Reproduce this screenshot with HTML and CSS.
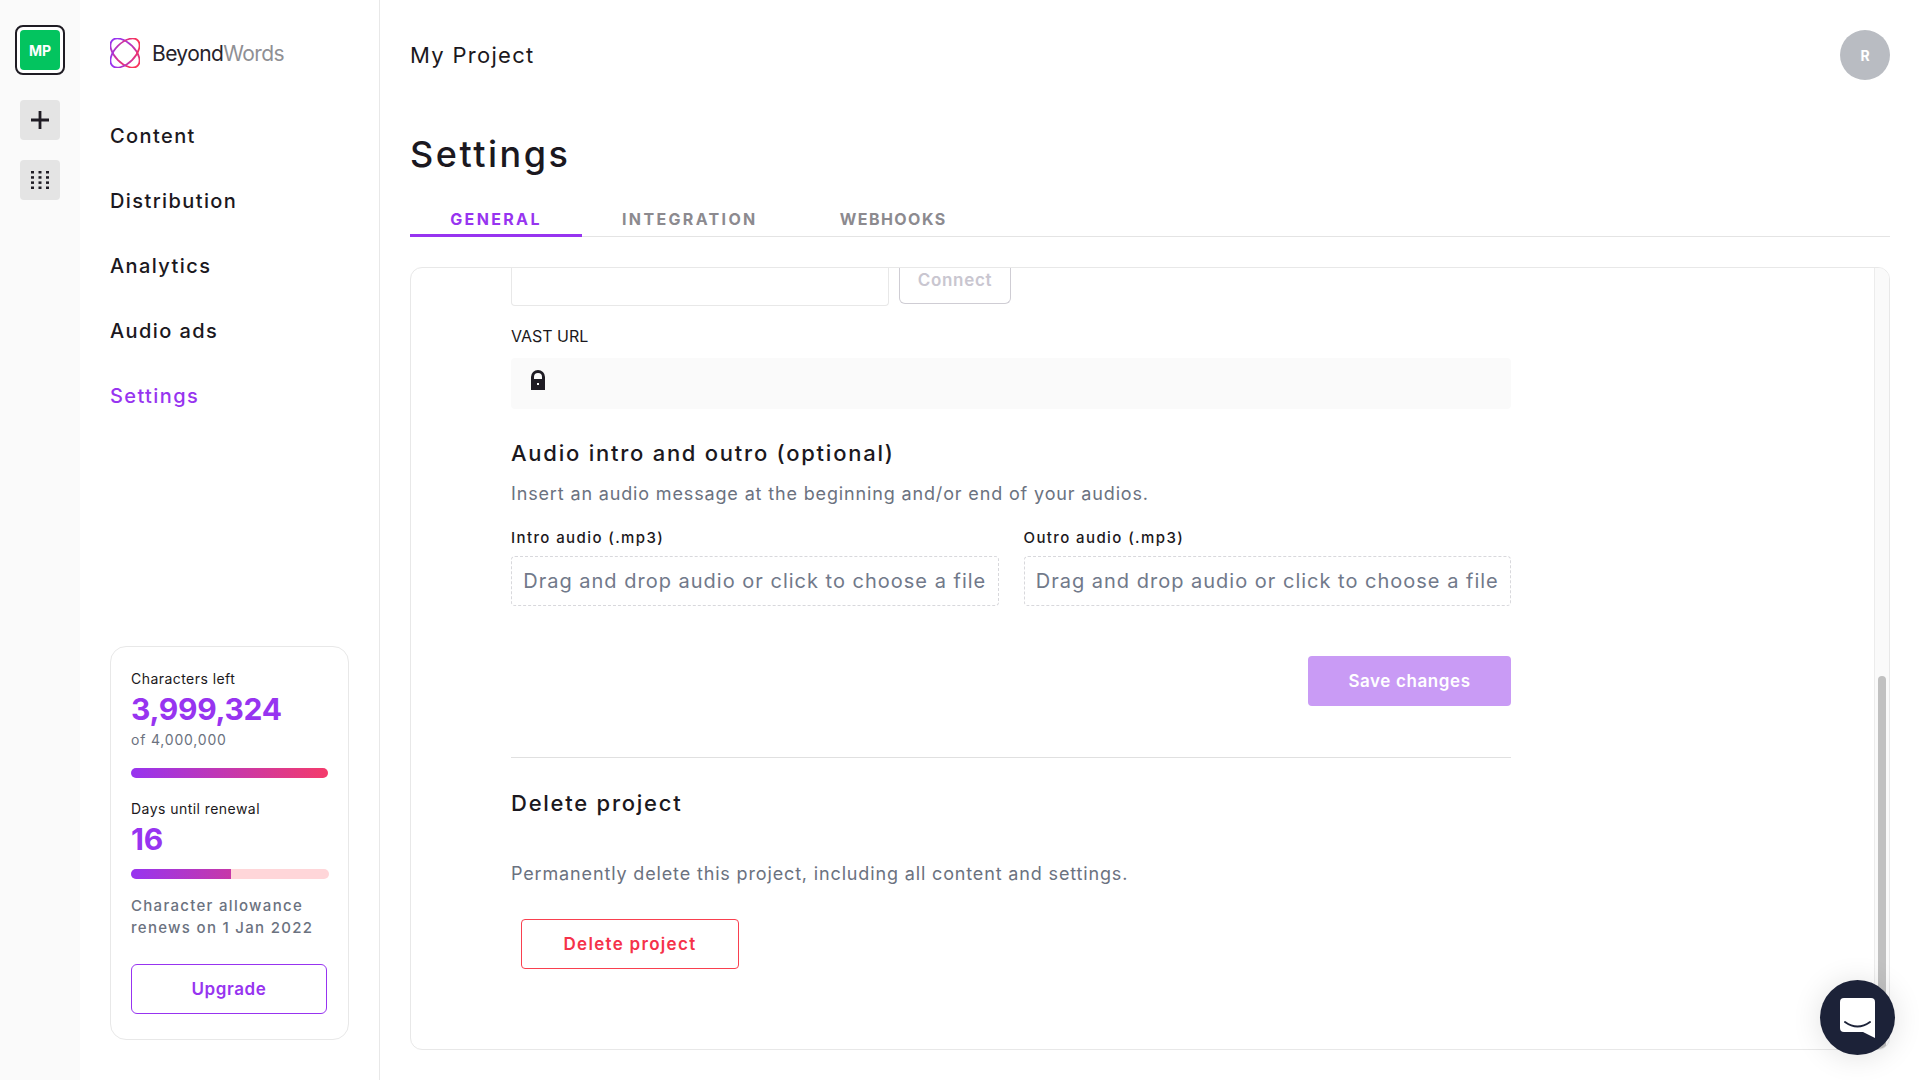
FILE: index.html
```html
<!DOCTYPE html>
<html lang="en">
<head>
<meta charset="utf-8">
<title>Settings</title>
<link rel="stylesheet" href="styles.css">
</head>
<body>
<div class="app">
  <aside class="rail">
    <div class="project-ring"><div class="project-tile">MP</div></div>
    <div class="rail-btn rail-btn-add">
      <svg width="20" height="20" viewBox="0 0 20 20"><path d="M10 1v18M1 10h18" stroke="#1f1c24" stroke-width="2.800" fill="none"/></svg>
    </div>
    <div class="rail-btn">
      <svg width="20" height="20" viewBox="0 0 20 20" fill="#1f1c24"><rect x="1" y="1" width="3" height="2.500"/><rect x="8.500" y="1" width="3" height="2.500"/><rect x="16" y="1" width="3" height="2.500"/><rect x="1" y="6.200" width="3" height="2.500"/><rect x="8.500" y="6.200" width="3" height="2.500"/><rect x="16" y="6.200" width="3" height="2.500"/><rect x="1" y="11.400" width="3" height="2.500"/><rect x="8.500" y="11.400" width="3" height="2.500"/><rect x="16" y="11.400" width="3" height="2.500"/><rect x="1" y="16.500" width="3" height="2.500"/><rect x="8.500" y="16.500" width="3" height="2.500"/><rect x="16" y="16.500" width="3" height="2.500"/></svg>
    </div>
  </aside>
  <nav class="sidebar">
    <div class="logo">
      <svg width="30" height="30" viewBox="0 0 30 30" fill="none">
        <defs><linearGradient id="lg" x1="0" y1="8" x2="30" y2="22" gradientUnits="userSpaceOnUse"><stop offset="0" stop-color="#9734f0"/><stop offset="1" stop-color="#fb3358"/></linearGradient></defs>
        <ellipse cx="15" cy="15" rx="18" ry="10" transform="rotate(45 15 15)" stroke="url(#lg)" stroke-width="1.800"/>
        <ellipse cx="15" cy="15" rx="18" ry="10" transform="rotate(-45 15 15)" stroke="url(#lg)" stroke-width="1.800"/>
      </svg>
      <span class="logo-text">Beyond<span class="logo-muted">Words</span></span>
    </div>
    <ul class="menu">
      <li>Content</li>
      <li>Distribution</li>
      <li>Analytics</li>
      <li>Audio ads</li>
      <li class="menu-active">Settings</li>
    </ul>
    <div class="usage">
      <div class="usage-label">Characters left</div>
      <div class="usage-num">3,999,324</div>
      <div class="usage-of">of 4,000,000</div>
      <div class="bar bar-chars"><div class="bar-fill bar-full"></div></div>
      <div class="usage-label usage-label-days">Days until renewal</div>
      <div class="usage-num">16</div>
      <div class="bar bar-days"><div class="bar-fill bar-half"></div></div>
      <div class="usage-note">Character allowance<br>renews on 1 Jan 2022</div>
      <div class="upgrade">Upgrade</div>
    </div>
  </nav>
  <main class="main">
    <header class="topbar">
      <div class="project-name">My Project</div>
      <div class="avatar">R</div>
    </header>
    <h1 class="title">Settings</h1>
    <div class="tabs">
      <div class="tab tab-active">GENERAL</div>
      <div class="tab tab-integration">INTEGRATION</div>
      <div class="tab tab-webhooks">WEBHOOKS</div>
    </div>
    <section class="panel">
      <div class="scroller">
        <div class="connect-row">
          <div class="connect-input"></div>
          <div class="connect-btn">Connect</div>
        </div>
        <div class="field-label">VAST URL</div>
        <div class="locked">
          <svg width="16" height="20" viewBox="0 0 16 20"><path fill-rule="evenodd" d="M1 20V7a7 7 0 0 1 14 0v13zM4 9h8V7a4 4 0 0 0-8 0zM7 13v2h2v-2z" fill="#1f1c24"/></svg>
        </div>
        <h2 class="section-title">Audio intro and outro (optional)</h2>
        <p class="section-text section-text-audio">Insert an audio message at the beginning and/or end of your audios.</p>
        <div class="drops">
          <div class="drop-col">
            <div class="drop-label">Intro audio (.mp3)</div>
            <div class="dropzone">Drag and drop audio or click to choose a file</div>
          </div>
          <div class="drop-col">
            <div class="drop-label">Outro audio (.mp3)</div>
            <div class="dropzone">Drag and drop audio or click to choose a file</div>
          </div>
        </div>
        <div class="save-row"><div class="save">Save changes</div></div>
        <hr class="divider">
        <h2 class="section-title delete-title">Delete project</h2>
        <p class="section-text delete-text">Permanently delete this project, including all content and settings.</p>
        <div class="delete-btn">Delete project</div>
      </div>
      <div class="scrollbar"><div class="thumb"></div></div>
    </section>
  </main>
</div>
<div class="chat">
  <svg width="35" height="40" viewBox="0 0 35 40"><path d="M4 0h27a4 4 0 0 1 4 4v36l-12-6H4a4 4 0 0 1-4-4V4a4 4 0 0 1 4-4z" fill="#fff"/><path d="M5 24q12.500 9 25 0" stroke="#1c2238" stroke-width="2" fill="none" stroke-linecap="round"/></svg>
</div>
</body>
</html>
```
FILE: styles.css
```css
* { box-sizing: border-box; }
html, body { margin: 0; padding: 0; height: 100%; background: #fff; overflow: hidden; }
body { font-family: Inter, "Noto Sans", sans-serif; color: #1b1820; }
.app { display: flex; height: 1080px; }

.rail { width: 80px; flex: none; background: #fafafa; display: flex; flex-direction: column; align-items: center; padding-top: 25px; }
.project-ring { width: 50px; height: 50px; border: 2px solid #1f1c24; border-radius: 8px; padding: 3px; background: #fff; }
.project-tile { width: 40px; height: 40px; background: #03c45f; border-radius: 4px; color: #fff; font-weight: 700; font-size: 14px; display: flex; align-items: center; justify-content: center; }
.rail-btn { width: 40px; height: 40px; border-radius: 4px; background: #e4e4e4; margin-top: 20px; display: flex; align-items: center; justify-content: center; }
.rail-btn-add { margin-top: 25px; }

.sidebar { width: 300px; flex: none; border-right: 1px solid #e8e8e8; padding: 38px 30px 40px; display: flex; flex-direction: column; }
.logo { display: flex; align-items: center; gap: 12px; height: 30px; }
.logo-text { font-size: 21px; letter-spacing: -0.6px; color: #26232b; }
.logo-muted { color: #8f8f94; }
.menu { list-style: none; margin: 35px 0 0; padding: 0; flex: 1; }
.menu li { height: 65px; display: flex; align-items: center; font-size: 20px; font-weight: 500; letter-spacing: 1.4px; }
.menu .menu-active { color: #9734f0; }

.usage { height: 394px; border: 1px solid #e8e8e8; border-radius: 16px; padding: 22px 20px 0; }
.usage-label { font-size: 14px; line-height: 20px; letter-spacing: 0.45px; }
.usage-label-days { margin-top: 21px; }
.usage-num { font-size: 30px; line-height: 38px; font-weight: 700; color: #9734f0; margin-top: 1px; letter-spacing: -0.3px; }
.usage-of { font-size: 14px; line-height: 20px; margin-top: 2px; color: #6b7280; letter-spacing: 0.8px; }
.bar { height: 10px; border-radius: 5px; background: #ffd6d9; overflow: hidden; }
.bar-chars { margin-top: 18px; width: 197px; }
.bar-days { margin-top: 11px; width: 198px; }
.bar-fill { height: 100%; background: linear-gradient(90deg, #9734f0, #f43b6b); }
.bar-full { width: 100%; }
.bar-half { width: 50.500%; background: linear-gradient(90deg, #9734f0, #c738a8); }
.usage-note { margin-top: 16px; font-size: 15px; line-height: 22px; font-weight: 500; color: #6b7280; letter-spacing: 1.3px; }
.upgrade { margin-top: 25px; width: 196px; height: 50px; border: 1px solid #9734f0; border-radius: 6px; color: #9734f0; font-weight: 600; font-size: 17px; letter-spacing: 0.6px; display: flex; align-items: center; justify-content: center; }

.main { flex: 1; min-width: 0; padding: 30px 30px 0 30px; display: flex; flex-direction: column; }
.topbar { display: flex; justify-content: space-between; align-items: center; height: 50px; }
.project-name { font-size: 22px; letter-spacing: 1.3px; }
.avatar { width: 50px; height: 50px; border-radius: 50%; background: #b9bcc2; color: #fff; font-weight: 700; font-size: 14px; display: flex; align-items: center; justify-content: center; }
.title { margin: 50px 0 0; font-size: 36px; line-height: 48px; font-weight: 500; letter-spacing: 2.5px; }
.tabs { display: flex; height: 45px; margin-top: 14px; border-bottom: 1px solid #e4e4e4; align-items: stretch; }
.tab { font-size: 16px; font-weight: 700; letter-spacing: 2.35px; color: #8c8a8f; padding: 17px 41px 0; }
.tab-active { color: #9734f0; border-bottom: 3px solid #9734f0; margin-bottom: -1px; width: 172px; text-align: center; padding-left: 0; padding-right: 0; }
.tab-integration { padding-left: 40px; }
.tab-webhooks { padding-left: 41px; letter-spacing: 1.45px; }

.panel { position: relative; margin-top: 30px; height: 783px; border: 1px solid #e8e8e8; border-radius: 12px; overflow: hidden; }
.scroller { width: 1000px; margin-left: 100px; }
.connect-row { display: flex; gap: 10px; height: 38px; }
.connect-input { width: 378px; height: 38px; border: 1px solid #e8e8e8; border-top: 0; border-radius: 0 0 4px 4px; }
.connect-btn { width: 112px; height: 36px; border: 1px solid #cfcdd4; border-top: 0; border-radius: 0 0 6px 6px; color: #c9c6d0; font-weight: 600; font-size: 17px; display: flex; align-items: center; justify-content: center; padding-bottom: 11px; letter-spacing: 0.7px; }
.field-label { margin-top: 20px; font-size: 16px; line-height: 20px; }
.locked { margin-top: 12px; height: 51px; background: #fafafa; border-radius: 4px; display: flex; align-items: center; padding: 0 0 7px 19px; }
.section-title { margin: 30px 0 0; font-size: 22px; line-height: 28px; font-weight: 500; letter-spacing: 1.75px; }
.section-text { margin: 12px 0 0; font-size: 18px; line-height: 24px; color: #6b7280; letter-spacing: 0.85px; }
.section-text-audio { margin-top: 15px; }
.drops { display: flex; gap: 25px; margin-top: 22px; }
.drop-col { flex: 1; }
.drop-label { font-size: 15px; line-height: 20px; font-weight: 500; letter-spacing: 1.4px; }
.dropzone { margin-top: 8px; height: 50px; border: 1px dashed #d8d8dc; border-radius: 4px; display: flex; align-items: center; justify-content: center; font-size: 20px; color: #71798a; letter-spacing: 1px; white-space: nowrap; }
.save-row { display: flex; justify-content: flex-end; margin-top: 50px; }
.save { width: 203px; height: 50px; border-radius: 4px; background: #c99bf5; color: #fff; font-weight: 600; font-size: 17px; letter-spacing: 0.6px; display: flex; align-items: center; justify-content: center; }
.divider { border: 0; border-top: 1px solid #e0e0e0; margin: 51px 0 0; }
.delete-title { margin-top: 31px; }
.delete-text { margin-top: 45px; }
.delete-btn { margin: 33px 0 0 10px; width: 218px; height: 50px; border: 1px solid #f9404f; border-radius: 4px; color: #f5324a; font-weight: 600; font-size: 17px; letter-spacing: 1.3px; display: flex; align-items: center; justify-content: center; }

.scrollbar { position: absolute; top: 0; right: 0; bottom: 0; width: 15px; background: #fafafa; border-left: 1px solid #ececec; }
.thumb { position: absolute; top: 408px; left: 3px; width: 8px; bottom: 0; background: #c1c1c1; border-radius: 4px 4px 0 0; }

.chat { position: fixed; left: 1820px; top: 980px; width: 75px; height: 75px; border-radius: 50%; background: #1c2238; box-shadow: 0 2px 30px rgba(0,0,0,.12); display: flex; align-items: center; justify-content: center; }
```
